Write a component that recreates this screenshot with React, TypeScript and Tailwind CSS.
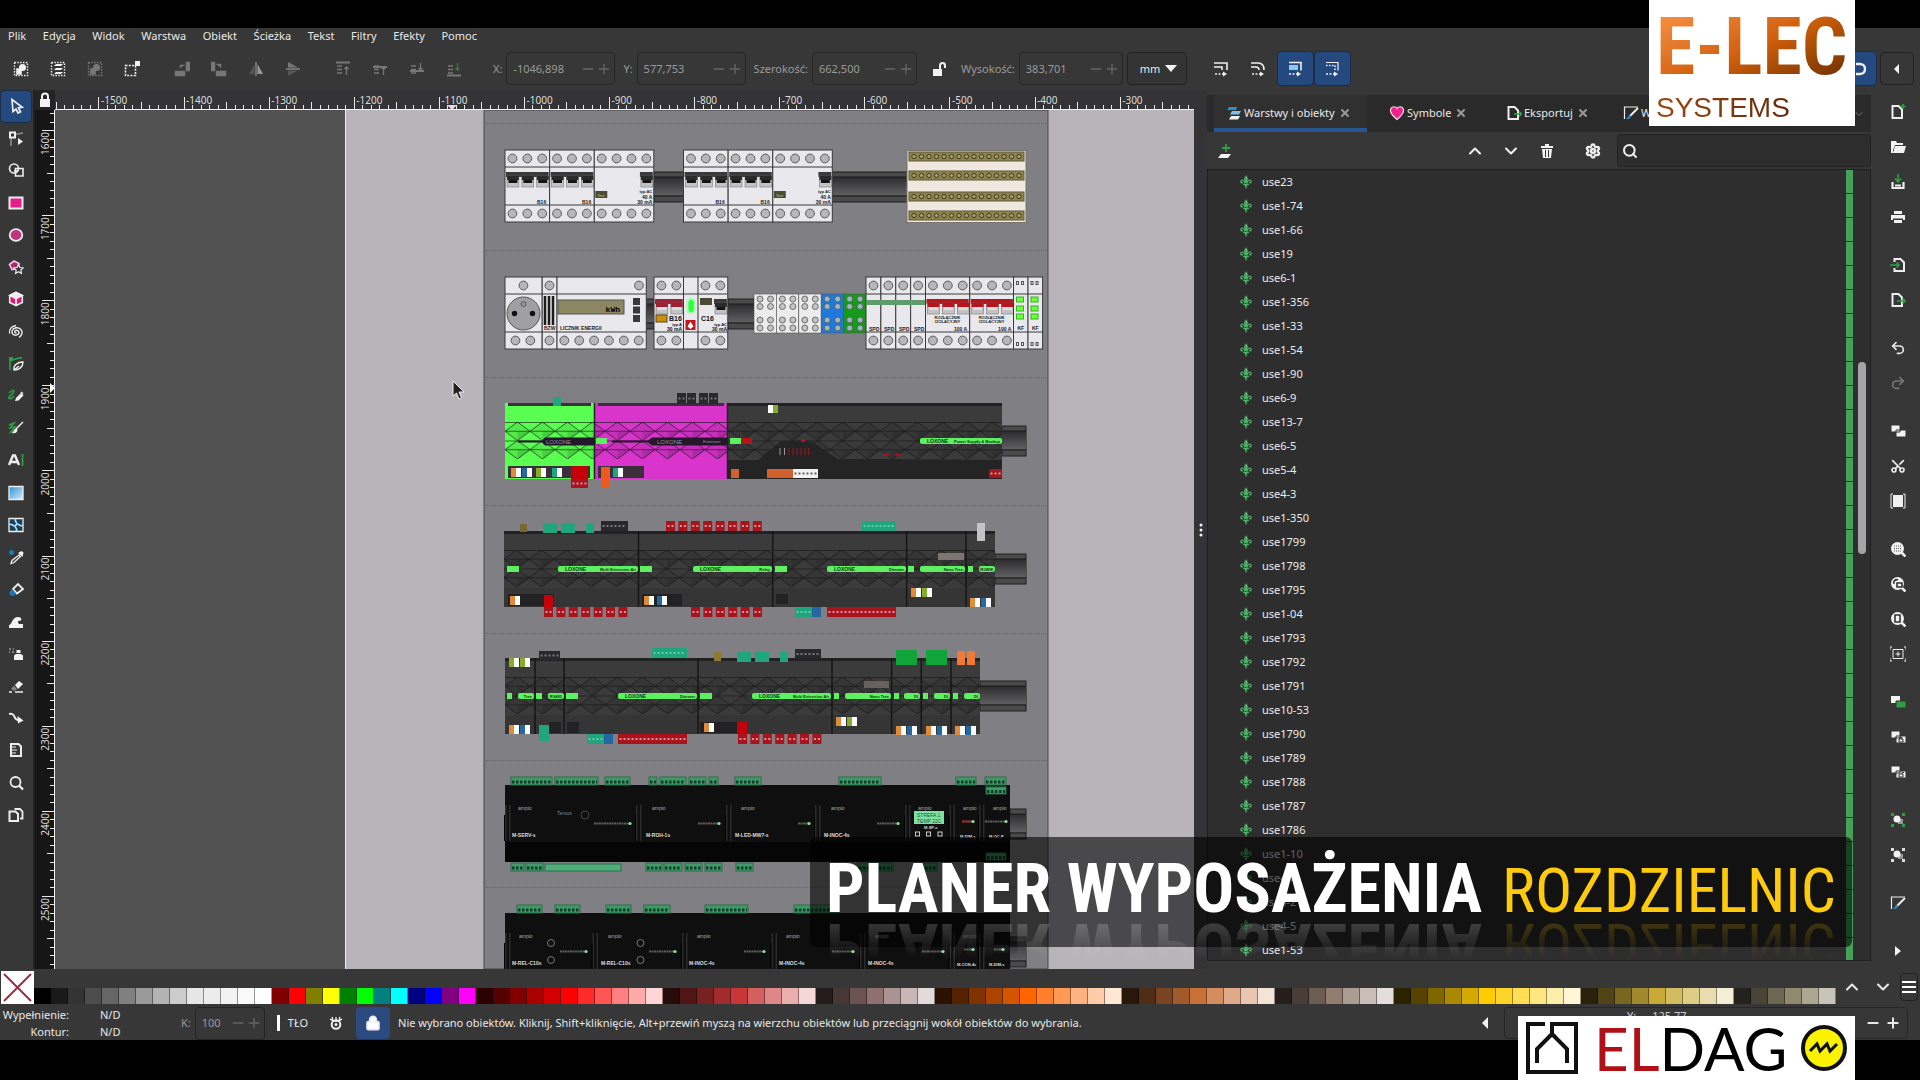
import React from 'react';
import {
  ChevronDown,
  ChevronUp,
  LockKeyhole,
  Minus,
  Plus,
  Redo2,
  Scissors,
  Search,
  Settings,
  Undo2,
  X,
} from 'lucide-react';

/* ---------- data ---------- */

const MENU = ['Plik', 'Edycja', 'Widok', 'Warstwa', 'Obiekt', 'Ścieżka', 'Tekst', 'Filtry', 'Efekty', 'Pomoc'];

const OBJECTS = [
  'use23', 'use1-74', 'use1-66', 'use19', 'use6-1', 'use1-356', 'use1-33', 'use1-54', 'use1-90', 'use6-9', 'use13-7',
  'use6-5', 'use5-4', 'use4-3', 'use1-350', 'use1799', 'use1798', 'use1795', 'use1-04', 'use1793', 'use1792',
  'use1791', 'use10-53', 'use1790', 'use1789', 'use1788', 'use1787', 'use1786', 'use1-10', 'use4-6', 'use4-2',
  'use4-5', 'use1-53',
];

const PALETTE = (
  '000000 1a1a1a 333333 4d4d4d 666666 808080 999999 b3b3b3 cccccc e6e6e6 ececec f2f2f2 f9f9f9 ffffff ' +
  '800000 ff0000 808000 ffff00 008000 00ff00 008080 00ffff 000080 0000ff 800080 ff00ff ' +
  '2b0000 550000 800000 aa0000 d40000 ff0000 ff2a2a ff5555 ff8080 ffaaaa ffd5d5 ' +
  '280b0b 501616 782121 a02c2c c83737 d35f5f de8787 e9afaf f4d7d7 ' +
  '241c1c 483737 6c5353 916f6f ac9393 c8b7b7 e3dbdb ' +
  '2b1100 552200 803300 aa4400 d45500 ff6600 ff7f2a ff9955 ffb380 ffccaa ffe6d5 ' +
  '28170b 502d16 784421 a05a2c c87137 d38d5f deaa87 e9c6af f4e3d7 ' +
  '241f1c 483e37 6c5d53 917c6f ac9d93 c8beb7 e3dedb ' +
  '2b2200 554400 806600 aa8800 d4aa00 ffcc00 ffd42a ffdd55 ffe680 ffeeaa fff6d5 ' +
  '28220b 504416 786721 a0892c c8ab37 d3bc5f decd87 e9ddaf f4eed7 ' +
  '24221c 484537 6c6753 918a6f aca793 c8c4b7'
).split(' ');

const range = (n: number) => Array.from({ length: n }, (_, i) => i);

/* ---------- icons ---------- */

const Icon: React.FC<{ children: React.ReactNode }> = ({ children }) => (
  <svg viewBox="0 0 16 16" className="size-4 shrink-0" fill="none" stroke="#eeeeee" strokeWidth="1.6">
    {children}
  </svg>
);

const W = '#f2f2f2';
const G = '#2f9e44';

const TOOLS: [string, React.ReactNode][] = [
  ['Wskaźnik', <path key="a" d="M4 1.500l1 12 3-2.500 2 4 2.500-1.200-2-4 3.800-.6z" strokeWidth="1.700" />],
  ['Węzły', <g key="a"><path d="M3 16V10c0-5 4-6 12-7" stroke="#8a8a8a" /><path d="M2 2.500h5v5H2z" fill="#333" strokeWidth="2" /><path d="M10 8l5 3.500-5 3.500z" fill={W} stroke="none" /></g>],
  ['Kształty', <g key="a"><circle cx="6" cy="6.500" r="4.500" /><path d="M7.500 6.500H15V14H7.500z" /><path d="M6 9h4" /></g>],
  ['Prostokąt', <path key="a" d="M1.500 2.500h13v11h-13z" fill="#e91e8c" strokeWidth="2" />],
  ['Elipsa', <ellipse key="a" cx="8" cy="8" rx="6.300" ry="5.800" fill="#c2347c" strokeWidth="1.800" />],
  ['Gwiazda', <g key="a"><path d="M1.500 5.500L6 2l5 2.500-1 5-6 1z" stroke="#f3c4dc" fill="#a82a68" /><path d="M10.500 5.500l1.400 3 3.300.4-2.400 2.200.6 3.300-2.900-1.700-2.900 1.700.6-3.300-2.400-2.200 3.300-.4z" fill="#333" strokeWidth="1.200" /></g>],
  ['Obiekt 3D', <g key="a"><path d="M8 1.500l6.300 3v7L8 14.500l-6.300-3v-7z" fill="#d81b74" /><path d="M8 1.500l6.300 3L8 7.500l-6.300-3z" fill="#fbe3ef" /><path d="M8 7.500v7" strokeWidth="1.800" /></g>],
  ['Spirala', <path key="a" d="M8.500 8.500c-.8.900-2.200 0-1.700-1.200.8-1.600 4-1.200 4.200 1 .2 2.700-4 3.700-6 2C2.800 8.200 4 4.300 8 3.800c4-.4 6.500 2.500 6 5.500-.3 1.900-1.500 3.200-3 4M1.500 9.500C.8 5.500 3.500 2 8 1.500" strokeWidth="1.400" />],
  ['Pióro', <g key="a"><path d="M2 14V3c3 3 7-2 12-1" stroke={G} /><path d="M1 1h4v4H1z" fill={G} stroke="none" /><path d="M6 14c-1-5 4-8 9-8 0 5-4 8-9 8zM6 14l5-4" strokeWidth="1.400" /></g>],
  ['Ołówek', <g key="a"><path d="M1 5c5-5 7-2 2 2s0 5 3 1" stroke={G} /><path d="M7 13l1-3 5-5 2.500 2.500-5 5z" fill={W} stroke="none" /><path d="M13 4l2 2" /></g>],
  ['Kaligrafia', <g key="a"><path d="M1 5l5-2-4 5 5-1-4 5 5-2" stroke={G} /><path d="M15 2L8 9" strokeWidth="1.400" /><path d="M8.500 8c-3 1-2 4-5 5 4 1 6-1 6-3.500z" fill={W} stroke="none" /></g>],
  ['Tekst', <g key="a"><path d="M1 13L5 3.500h2L11 13M3 10h6" strokeWidth="2.400" /><path d="M14.500 2v12" stroke={G} strokeWidth="1.800" /></g>],
  ['Gradient', <path key="a" d="M1 1.500h14v13H1z" fill="url(#sky)" strokeWidth="1.300" />],
  ['Siatka', <g key="a"><path d="M1 1.500h14v13H1z" fill="#1d3f55" strokeWidth="1.300" /><path d="M8 1.500c-3 3 3 4 0 6.500s3 3.500 0 6.500M1 8c3-3 4 3 7 0s4 3 7 0" stroke="#9fdcff" /></g>],
  ['Próbnik', <g key="a"><circle cx="3.500" cy="3.500" r="2.500" fill="#1c79b5" stroke="none" /><path d="M3 14.500l1-3L11 6l1.500 1.500L6 13.500z" strokeWidth="1.300" /><path d="M10 4l4.500 4 1-4.500-2-1.500z" fill={W} stroke="none" /></g>],
  ['Wypełnianie', <g key="a"><path d="M5 8l5-5 5 5-6 4.500z" strokeWidth="1.800" /><path d="M4 9c-5 5 2 6.500 3 3.500z" fill="#1c79b5" stroke="#1c79b5" /></g>],
  ['Ulepszanie', <path key="a" d="M1 14v-3c3 0 3-8 9-8 4 0 4 3 2 4-2-1-3 1-1 3h4v4z" fill={W} stroke="none" />],
  ['Spray', <g key="a"><path d="M6 14V9.500L8 8h5l2 1.500V14zM8.500 4h4v3h-4z" fill={W} stroke="none" /><path d="M1 3h2M5 3h1M1 6h1M4 6h2" stroke="#999" /></g>],
  ['Gumka', <g key="a"><path d="M7 7l4-4 4 3-5 5z" fill={W} stroke="none" /><path d="M6 8l3 3-3 2-3-2.500z" fill="#888" stroke="none" /><path d="M1 14h3M7 14h8" /></g>],
  ['Łącznik', <g key="a"><path d="M1 4c7-2 4 7 10 6" strokeWidth="2" /><path d="M9.500 6l6 4.500-5.500 3z" fill={W} stroke="none" /></g>],
  ['Miarka', <g key="a"><path d="M3 2h7.500l2.500 2.500V14H3z" strokeWidth="2" /><path d="M4 5h4M4 8h5M4 11h4" strokeWidth="1.200" /></g>],
  ['Powiększenie', <g key="a"><circle cx="7.500" cy="7" r="5" strokeWidth="1.800" /><path d="M11 10.500l4 4" strokeWidth="2.400" /></g>],
  ['Strony', <g key="a"><path d="M1.500 4.500h6L10 7v7H1.500z" strokeWidth="2" /><path d="M6.500 2h5.500l2.500 2.500v7H12" strokeWidth="1.800" /></g>],
];

const two = <path d="M1 2h9v7H1zM6 7h10v7H6z" fill={W} stroke="#333" strokeWidth="1" />;
const page = <path d="M2.500 2h6L12 5.500V14H2.500z" strokeWidth="2" />;
const lens = (
  <g>
    <circle cx="7.500" cy="7.500" r="6.500" fill={W} stroke="none" />
    <path d="M11 11l4.500 4.500" strokeWidth="2.600" />
  </g>
);
const handles = (c: string) => <path d="M1 1h3v3H1zM12 1h3v3h-3zM1 12h3v3H1zM12 12h3v3h-3z" fill={c} stroke="none" />;

// grouped the way the command bar separates them
const COMMANDS: [string, React.ReactNode][][] = [
  [
    ['Nowy', <g key="a">{page}<path d="M13 0v5M10.500 2.500h5" stroke={G} /></g>],
    ['Otwórz', <path key="a" d="M1 2h5l1 2h6v2H5l-2 5V14H1zM5 7h11l-2 7H3z" fill={W} stroke="none" />],
    ['Zapisz', <g key="a"><path d="M2.500 8v6h11V8M5 11.500h6" strokeWidth="2.200" /><path d="M8 0v7M5 4.500L8 8l3-3.500" stroke={G} /></g>],
    ['Drukuj', <path key="a" d="M4 2h8v3H4zM1 6h14v5h-2V9.500H3V11H1zM4 11h8v3H4z" fill={W} stroke="none" />],
  ],
  [
    ['Importuj', <g key="a"><path d="M4.500 5V2h6L14 5.500V14H4.500v-3" strokeWidth="2" /><path d="M0 8h9M6.500 5.500L9 8l-2.500 2.500" stroke={G} /></g>],
    ['Eksportuj plik', <g key="a">{page}<path d="M7 9h8M12.500 6.500L15 9l-2.500 2.500" stroke={G} /></g>],
  ],
  [
    ['Cofnij', <Undo2 key="a" x="0" y="0" width="16" height="16" strokeWidth="2.500" />],
    ['Ponów', <Redo2 key="a" x="0" y="0" width="16" height="16" stroke="#777" strokeWidth="2.500" />],
  ],
  [
    ['Duplikuj', two],
    ['Wytnij', <g key="a" transform="rotate(-90 8 8)"><Scissors x="0" y="0" width="16" height="16" strokeWidth="2.600" /></g>],
    ['Wklej', <g key="a"><path d="M4 3h8v10H4z" fill={W} strokeWidth="2" /><path d="M3 1H1v14h2M13 1h2v14h-2" strokeWidth="1" /></g>],
  ],
  [
    ['Powiększ zaznaczenie', <g key="a">{lens}<path d="M4 5h7M4 7.500h7M4 10h7" stroke="#555" strokeWidth="1" strokeDasharray="1 1" /></g>],
    ['Powiększ rysunek', <g key="a">{lens}<path d="M7 7h5v4H7zM4 8a3 3 0 0 1 4-4" stroke="#333" fill={W} /></g>],
    ['Powiększ stronę', <g key="a">{lens}<path d="M5 4h5v7H5z" stroke="#333" /></g>],
    ['Wyśrodkuj stronę', <g key="a"><path d="M3 3.500h10v9H3zM8 5.500v5M5.500 8h5" strokeWidth="1" /><path d="M2 1H0v3M14 1h2v3M2 15H0v-3M14 15h2v-3" strokeWidth="1" /></g>],
  ],
  [
    ['Powiel', <g key="a"><path d="M1 2h9v7H1z" fill={W} stroke="none" /><path d="M6 7h10v7H6z" fill={G} stroke="#333" strokeWidth="1" /></g>],
    ['Klonuj', <g key="a">{two}<path d="M9 10h4v3H9zM10 10V8.500h2V10" stroke="#333" strokeWidth="1" /></g>],
    ['Odłącz klon', <g key="a">{two}<path d="M9 10h4v3H9zM12 10V8.500h2" stroke="#333" strokeWidth="1" /></g>],
  ],
  [
    ['Grupuj', <g key="a">{handles(G)}<path d="M8 7h5v5H8z" fill="#999" stroke="none" /><circle cx="7" cy="7" r="3.500" fill={W} stroke="none" /></g>],
    ['Rozgrupuj', <g key="a">{handles('#ddd')}<path d="M8 7h5v5H8z" fill="#999" stroke="none" /><circle cx="7" cy="7" r="3.500" fill={W} stroke="none" /></g>],
  ],
  [['Wypełnienie i kontur', <g key="a"><path d="M1.500 14V2H15" strokeWidth="1.200" /><path d="M15 3L7 11" strokeWidth="2" /><path d="M7 10c-2 0-2 3-4 4 3 1 5-1 5-3z" fill="#2c86c4" stroke="none" /></g>]],
  [['Więcej', <path key="a" d="M5 3l6 5-6 5z" fill={W} stroke="none" />]],
];

const dots = <path d="M1.500 1.500h13v13h-13z" strokeWidth="1.400" strokeDasharray="1.500 1.300" />;
const align = (bar: number, up: boolean, c: string) => (
  <g stroke="#777">
    <path d={`M1 ${bar}h14`} strokeWidth="2" />
    <path d="M2 5h5M2 8.500h5M2 12h5" strokeWidth="1.400" />
    <path d={up ? 'M11.500 14V6M9.500 8l2-2 2 2' : 'M11.500 2v7M9.500 7l2 2 2-2'} stroke={c} strokeWidth="1.300" />
  </g>
);

const SELECT_ACTIONS: [string, React.ReactNode][][] = [
  [
    ['Zaznacz wszystko', <g key="a">{dots}<path d="M4 8h4v5H4z" fill={W} /><circle cx="9.500" cy="6.500" r="3.500" fill={W} stroke="none" /></g>],
    ['Zaznacz w warstwach', <g key="a">{dots}<path d="M6 3h7l-2 2H4zM6 7h7l-2 2H4zM6 11h7l-2 2H4z" fill={W} stroke="none" /></g>],
    ['Odznacz', <g key="a" opacity="0.35">{dots}<path d="M4 8h4v5H4z" fill={W} /><circle cx="9.500" cy="6.500" r="3.500" fill={W} stroke="none" /></g>],
    ['Przełącz ramkę', <g key="a"><path d="M1.500 4.500h10v10h-10z" strokeDasharray="2 1.300" /><path d="M11 0h5v5h-5z" fill={W} stroke="none" /></g>],
  ],
  [
    ['Obróć w lewo', <path key="a" d="M1 10h10v5H1zM12 1h4v9h-4zM6 7V4h5" fill="#777" stroke="#777" strokeWidth="0.500" />],
    ['Obróć w prawo', <path key="a" d="M5 10h10v5H5zM0 1h4v9H0zM5 3h5v4" fill="#777" stroke="#777" strokeWidth="0.500" />],
    ['Odbij poziomo', <g key="a" stroke="none"><path d="M6.500 3v10H1z" fill="#555" /><path d="M9.500 3v10H15z" fill="#999" /><path d="M7.500 1h1v14h-1z" fill="#aaa" /></g>],
    ['Odbij pionowo', <g key="a" stroke="none"><path d="M3 1v5.500h10z" fill="#777" /><path d="M3 15V9.500h10z" fill="#555" /><path d="M1 7.500h14v1H1z" fill="#aaa" /></g>],
  ],
  [
    ['Na wierzch', align(1.5, true, '#777')],
    ['Wyżej', align(6, true, '#777')],
    ['Niżej', align(10, false, '#777')],
    ['Pod spód', align(14.5, false, '#3d7a3d')],
  ],
];

const SNAP: [string, boolean, React.ReactNode][] = [
  ['Skaluj kontur', false, <path key="a" d="M1 2h13v7M1 6h8v3" />],
  ['Skaluj rogi', false, <path key="a" d="M1 2h7c4 0 6 3 6 7M1 6h5c2 0 3 1 3 3" />],
  ['Przesuń gradienty', true, <g key="a"><path d="M2 1.500h12v8" /><path d="M2 4h9v5H2z" fill="#8fc8ee" stroke="none" /></g>],
  ['Przesuń wzory', true, <g key="a"><path d="M2 1.500h12v8" strokeWidth="1.200" /><path d="M2 4.500h9v5" strokeDasharray="1.500 1.500" /></g>],
];

const Fleur = () => (
  <svg viewBox="0 0 12 14" className="h-3.5 w-3 shrink-0" fill="#4fae6a">
    <path d="M6 0l2 3.500L6.800 8H5.200L4 3.500z" />
    <path d="M5 8.500C4.500 5 1.300 4 .8 6.500c-.2 1.500 1.500 1.800 1.800.8M7 8.500C7.500 5 10.700 4 11.200 6.500c.2 1.500-1.500 1.800-1.800.8" fill="none" stroke="#4fae6a" strokeWidth="1.300" />
    <path d="M3 8.700h6V10H7.500L6 14l-1.500-4H3z" />
  </svg>
);

/* ---------- small controls ---------- */

const ToolButton: React.FC<{ label: string; active?: boolean; className?: string; children: React.ReactNode }> = ({
  label,
  active,
  className = '',
  children,
}) => (
  <button
    type="button"
    aria-label={label}
    className={`flex shrink-0 items-center justify-center rounded ${active ? 'bg-[#24497f] ring-1 ring-[#1b2c49]' : ''} ${className}`}
  >
    <Icon>{children}</Icon>
  </button>
);

const Spin: React.FC<{ label: string; value: string; id: string; className: string }> = ({ label, value, id, className }) => (
  <div className="flex shrink-0 items-center gap-1 text-[#9a9a9a]">
    <label htmlFor={id}>{label}</label>
    <div className={`flex h-[33px] items-center rounded border border-[#242424] pl-1.5 pr-0.5 ${className}`}>
      <input id={id} readOnly value={value} className="w-0 min-w-0 flex-1 bg-transparent outline-none" />
      <button type="button" aria-label={`${label} mniej`} className="text-[#666]"><Minus className="size-4" strokeWidth={2} /></button>
      <button type="button" aria-label={`${label} więcej`} className="text-[#666]"><Plus className="size-4" strokeWidth={2} /></button>
    </div>
  </div>
);

/* ---------- rulers ---------- */

const STEP = 8.51;

const TopRuler = () => (
  <svg className="h-5 w-full" viewBox="55 90 1139 20" preserveAspectRatio="xMinYMin slice">
    <rect x="55" y="90" width="2400" height="20" fill="#343436" />
    {range(135).map((i) => {
      const x = 55 + 0.85 + i * STEP;
      const k = (i - 5 + 100) % 10;
      const h = k === 0 ? 12 : k === 5 ? 7 : 4;
      return <rect key={i} x={Math.round(x)} y={109 - h} width="1" height={h} fill="#e8e8e8" />;
    })}
    {range(13).map((i) => (
      <text key={i} x={101 + i * 85.1} y="104" fontSize="10" fill="#dcdcdc">{-1500 + i * 100}</text>
    ))}
    <rect x="55" y="109" width="2400" height="1" fill="#f4f4f4" />
    <path d="M447 105h10l-5 5z" fill="#e8d8e6" />
  </svg>
);

const SideRuler = () => (
  <svg className="h-[859px] w-5" viewBox="35 110 20 859">
    <rect x="35" y="110" width="20" height="859" fill="#161616" />
    {range(101).map((i) => {
      const y = 113 + i * STEP;
      const k = (i - 2 + 100) % 10;
      const w = k === 0 ? 12 : k === 5 ? 7 : 4;
      return <rect key={i} x={54 - w} y={Math.round(y)} width={w} height="1" fill="#e8e8e8" />;
    })}
    {range(10).map((i) => (
      <text key={i} transform={`translate(49 ${155 + i * 85.1}) rotate(-90)`} fontSize="10" fill="#dcdcdc">{1600 + i * 100}</text>
    ))}
    <rect x="54" y="110" width="1" height="859" fill="#f4f4f4" />
    <path d="M50 383v10l5-5z" fill="#fff" />
  </svg>
);

/* ---------- drawing: switchboard rows ---------- */

const M = 14.88; // one DIN module

const Rail = ({ x, w, y }: { x: number; w: number; y: number }) => (
  <g>
    <rect x={x} y={y} width={w} height="30" fill="#4a4a4c" stroke="#1e1e1e" />
    <rect x={x} y={y + 5} width={w} height="18" fill="url(#rail)" />
    <path d={`M${x} ${y + 5}h${w}M${x} ${y + 24}h${w}`} stroke="#1b1b1b" />
  </g>
);

const Case = ({ x, n, y }: { x: number; n: number; y: number }) => (
  <g stroke="#3a3a3a" strokeWidth="1">
    <rect x={x} y={y} width={n * M} height="72" fill="#e9e8ec" />
    <path d={`M${x} ${y + 17}h${n * M}M${x} ${y + 55}h${n * M}`} />
  </g>
);

const Screws = ({ x, n, y }: { x: number; n: number; y: number }) => (
  <g fill="#b7b7b9" stroke="#5b5b5b" strokeWidth="1">
    {range(n).map((i) => <circle key={i} cx={x + (i + 0.5) * M} cy={y} r="4.400" />)}
  </g>
);

const Levers = ({ x, n, y, c }: { x: number; n: number; y: number; c: string }) => (
  <g>
    <rect x={x + 1} y={y} width={n * M - 2} height="5" fill={c} />
    {range(Math.round(n)).map((i) => (
      <g key={i}>
        <rect x={x + i * M + 2} y={y + 4} width={M - 3} height="11" fill="#c3c3c6" stroke="#666" strokeWidth="0.500" />
        <rect x={x + i * M + 2} y={y + 4} width={M - 3} height="4" fill={c === '#3a3a3a' ? '#2a2a2a' : c} />
        <rect x={x + i * M + 3.5} y={y + 8} width={M - 6} height="3" fill={c === '#3a3a3a' ? '#151515' : '#ddd'} />
      </g>
    ))}
  </g>
);

const Breaker = ({ x, n, y, c = '#3a3a3a' }: { x: number; n: number; y: number; c?: string }) => (
  <g>
    <Case x={x} n={n} y={y} />
    <Screws x={x} n={Math.round(n)} y={y + 8.5} />
    <Screws x={x} n={Math.round(n)} y={y + 63.5} />
    <Levers x={x} n={n} y={y + 22} c={c} />
  </g>
);

const Rcd = ({ x, y }: { x: number; y: number }) => (
  <g>
    <Case x={x} n={4} y={y} />
    <Screws x={x} n={4} y={y + 8.5} />
    <Screws x={x} n={4} y={y + 63.5} />
    <Levers x={x + 3 * M} n={1} y={y + 22} c="#3a3a3a" />
    <rect x={x + 1} y={y + 41} width="12" height="7" fill="#4b4b35" />
    <text x={x + 3} y={y + 46.5} fontSize="4" fill="#c8c890">Test</text>
    <g fontSize="5" fontWeight="700" textAnchor="end" fill="#222">
      <text x={x + 58} y={y + 43} fontSize="4">typ AC</text>
      <text x={x + 58} y={y + 49}>40 A</text>
      <text x={x + 58} y={y + 54}>30 mA</text>
    </g>
  </g>
);

const R = ({ d, f, s }: { d: number[][]; f: string; s?: string }) => (
  <g fill={f} stroke={s}>
    {d.map(([x, y, w, h], i) => <rect key={i} x={x} y={y} width={w} height={h} />)}
  </g>
);

// connector block with a line of contact dots
const Conn = ({ d, f, dot = '#f0caca' }: { d: number[][]; f: string; dot?: string }) => (
  <g>
    {d.map(([x, y, w, h], i) => (
      <g key={i}>
        <rect x={x} y={y} width={w} height={h} fill={f} />
        <path d={`M${x + 1.5} ${y + h / 2}h${w - 3}`} stroke={dot} strokeWidth="2" strokeDasharray="2 2" opacity="0.7" />
      </g>
    ))}
  </g>
);

const Chips = ({ d }: { d: [number, number, string][] }) => (
  <g>
    {d.map(([x, y, c], i) => (
      <g key={i}>
        <rect x={x} y={y} width="10" height="9" fill="#fff" />
        <rect x={x} y={y} width="5" height="9" fill={c} />
      </g>
    ))}
  </g>
);

const Lox = ({ x, y, cuts, end }: { x: number; y: number; cuts: number[]; end: number }) => (
  <g>
    <rect x={x} y={y} width={end - x} height="76" fill="#3b3b3c" />
    <rect x={x} y={y + 57} width={end - x} height="19" fill="#353536" />
    <g transform={`translate(${x} ${y + 19})`}>
      <rect width={end - x} height="37" fill="url(#lattice)" />
    </g>
    <path d={`M${x} ${y + 1.5}H${end}`} stroke="#222" strokeWidth="3" />
    {cuts.map((c) => <path key={c} d={`M${c} ${y}v76`} stroke="#161616" strokeWidth="1.500" />)}
  </g>
);

const Bars = ({ y, d }: { y: number; d: [number, number, string, string][] }) => (
  <g>
    {d.map(([a, b, l, r], i) => (
      <g key={i} fontSize="5" fontWeight="700" fill="#123a12">
        <rect x={a} y={y} width={b - a} height="6" rx={r ? 2 : 0} fill="#5df060" />
        {l && <text x={a + 7} y={y + 5}>{l}</text>}
        {r && <text x={b - 2} y={y + 5} fontSize="4" textAnchor="end">{r}</text>}
      </g>
    ))}
  </g>
);

const Terms = ({ y, h, d }: { y: number; h: number; d: number[][] }) => (
  <g>
    {d.map(([a, b], i) => (
      <g key={i}>
        <rect x={a} y={y} width={b - a} height={h} fill="#3f9a68" stroke="#2b6f4a" />
        <path d={`M${a + 1} ${y + h / 2 + 1}H${b - 1}`} stroke="#123f27" strokeWidth="3" strokeDasharray="2.500 1.500" />
      </g>
    ))}
  </g>
);

const Slots = ({ d, y }: { d: number[]; y: number }) => (
  <g fill="#2b2b2c">
    {d.map((x) => (
      <g key={x}>
        <rect x={x} y={y + 20} width="1.500" height="36" />
        <rect x={x + 4} y={y + 20} width="1.500" height="36" />
        <rect x={x - 1} y={y + 30} width="1" height="26" fill="#000" />
      </g>
    ))}
  </g>
);

const Leds = ({ d }: { d: [number, number, number][] }) => (
  <g>
    {d.map(([a, b, y]) => (
      <g key={a}>
        <path d={`M${a} ${y}H${b}`} stroke="#5c5c5c" strokeWidth="2" strokeDasharray="2 0.500" />
        <circle cx={b} cy={y} r="1.600" fill="#8fe29a" />
      </g>
    ))}
  </g>
);

const Labels = ({ d, y, c = '#dddddd', bold = true, size = 5 }: { d: [number, string][]; y: number; c?: string; bold?: boolean; size?: number }) => (
  <g fontSize={size} fontWeight={bold ? 700 : 400} fill={c}>
    {d.map(([x, t]) => <text key={x} x={x} y={y}>{t}</text>)}
  </g>
);

const run = (x: number, n: number, y: number): number[][] => range(n).map((i) => [x + i * 12.4, y, 9, 10]);

const OR = '#e08a3c';
const BL = '#2467a3';
const GN = '#84ad2b';
const TL = '#1fa67c';
const RD = '#a8141e';

const Drawing = () => (
  <svg className="h-[859px] w-full" viewBox="55 110 1139 859" preserveAspectRatio="xMinYMin slice" fontFamily="Liberation Sans, sans-serif">
    <defs>
      <linearGradient id="rail" x1="0" y1="0" x2="0" y2="1">
        <stop offset="0" stopColor="#2c2c2d" />
        <stop offset="1" stopColor="#5f5f61" />
      </linearGradient>
      <linearGradient id="sky" x1="0" y1="0" x2="1" y2="1">
        <stop offset="0" stopColor="#2b8fd0" />
        <stop offset="1" stopColor="#d8eefc" />
      </linearGradient>
      <pattern id="lattice" width="25" height="18.500" patternUnits="userSpaceOnUse">
        <path d="M12.500 0L25 9.200 12.500 18.500 0 9.200z" fill="#000" fillOpacity="0.080" stroke="#101010" strokeOpacity="0.750" strokeWidth="0.900" />
        <path d="M12.500 9.200h12.500L12.500 18.500z" fill="#000" fillOpacity="0.120" />
        <path d="M0 .5h25M0 9.200h25" stroke="#161616" strokeOpacity="0.700" strokeWidth="0.900" />
      </pattern>
    </defs>
    <rect x="55" y="110" width="2400" height="859" fill="#525252" />
    <rect x="345" y="110" width="2200" height="859" fill="#b7b5b9" />
    <rect x="345" y="110" width="1" height="859" fill="#eee" />
    <rect x="484" y="110" width="564" height="859" fill="#807f83" stroke="#47474a" />
    {[123, 250, 377, 505, 633, 760, 887].map((y) => (
      <path key={y} d={`M485 ${y}.5h562`} stroke="#6e6d71" strokeDasharray="3 1" />
    ))}

    {/* row 1: breakers and terminal strip */}
    <Rail x={654} w={30} y={172} />
    <Rail x={832} w={75} y={172} />
    {[505, 683.500].map((x) => (
      <g key={x}>
        <Breaker x={x} n={3} y={150} />
        <Breaker x={x + 3 * M} n={3} y={150} />
        <Rcd x={x + 6 * M} y={150} />
        <Labels y={204} c="#222" d={[[x + 32, 'B16'], [x + 77, 'B16']]} />
      </g>
    ))}
    <rect x="907" y="150.500" width="119" height="72" fill="#efe8df" stroke="#77756c" />
    {[152, 171, 192, 211].map((y) => (
      <g key={y}>
        <rect x="909" y={y} width="115" height="9" fill="#8d8350" stroke="#5c5637" />
        {range(15).map((i) => <circle key={i} cx={914 + i * 7.5} cy={y + 4.5} r="2.200" fill="#a69c68" stroke="#3f3a1c" />)}
      </g>
    ))}

    {/* row 2: meter, fire alarm breaker, terminals, surge protection, switches */}
    <Rail x={646} w={8} y={299} />
    <Rail x={728} w={26} y={299} />
    <Case x={505} n={2.5} y={277} />
    <Case x={542.2} n={1} y={277} />
    <Case x={557} n={6} y={277} />
    <Screws x={516} n={1} y={285.500} />
    <Screws x={508} n={2} y={340.500} />
    <Screws x={542} n={1} y={285.500} />
    <Screws x={542} n={7} y={340.500} />
    <Screws x={631.500} n={1} y={285.500} />
    <circle cx="523.500" cy="313.500" r="16.500" fill="#a0a0a2" stroke="#555" />
    <g fill="#111"><circle cx="514.500" cy="313.500" r="2.700" /><circle cx="532.500" cy="313.500" r="2.700" /></g>
    <circle cx="523.500" cy="304" r="2.500" fill="#999" stroke="#555" />
    <path d="M545 296v29M549 296v29M553 296v29" stroke="#1b1b1b" strokeWidth="2.500" />
    <rect x="558" y="300" width="66" height="14" fill="#8b8763" stroke="#555" />
    <text x="620" y="312" textAnchor="end" fontSize="8" fontWeight="700" fontFamily="Liberation Mono">kWh</text>
    <R f="#3a3a3a" d={[[633, 298, 7, 7], [633, 306.500, 7, 7], [633, 315, 7, 7]]} />
    <Labels y={330} c="#222" d={[[544, 'BZW'], [560, 'LICZNIK ENERGII']]} />
    <Breaker x={654} n={2} y={277} c="#a11f33" />
    <Case x={683.5} n={1} y={277} />
    <rect x="687.500" y="299" width="7" height="14" rx="3" fill="#2dff3c" stroke="#a5ffae" strokeWidth="2" />
    <rect x="685.500" y="320" width="10" height="10" fill="#c4141c" />
    <path d="M690.500 321.500l3 5-3 2.500-3-2.500z" fill="#fff" />
    <Case x={698} n={2} y={277} />
    <Screws x={698} n={2} y={285.500} />
    <Screws x={698} n={2} y={340.500} />
    <Levers x={713} n={1} y={299} c="#3a3a3a" />
    <rect x="656" y="315" width="11" height="7" fill="#c99012" stroke="#5f4406" />
    <rect x="700" y="298" width="12" height="7" fill="#4b4b35" />
    <g fontSize="7" fontWeight="700" fill="#111">
      <text x="669" y="321">B16</text>
      <text x="701" y="321">C16</text>
      <g fontSize="5" textAnchor="end"><text x="682" y="331">30 mA</text><text x="727" y="331">30 mA</text></g>
      <g fontSize="4" textAnchor="end"><text x="682" y="326">typ A</text><text x="727" y="326">typ AC</text></g>
    </g>
    {['#ececec', '#ececec', '#ececec', '#1f78dd', '#179a1c'].map((c, i) => (
      <g key={i}>
        <rect x={754 + i * 22.4} y="294" width="22.400" height="39" fill={c} stroke="#555" strokeWidth="0.600" />
        {range(8).map((k) => (
          <circle key={k} cx={760 + i * 22.4 + (k % 2) * 10.5} cy={[299, 306.5, 320, 328][k >> 1]} r="3" fill={i > 2 ? '#9ab8bd' : '#c4c4c4'} stroke="#555" strokeWidth="0.800" />
        ))}
      </g>
    ))}
    {range(4).map((i) => <Case key={i} x={866 + i * M} n={1} y={277} />)}
    <Screws x={866} n={4} y={285.500} />
    <Screws x={866} n={4} y={340.500} />
    <rect x="866" y="300" width="59" height="5" fill="#5d9c6b" />
    <Labels y={331} c="#222" d={[[869, 'SPD'], [884, 'SPD'], [899, 'SPD'], [914, 'SPD']]} />
    {[925.500, 969.700].map((x) => (
      <g key={x}>
        <Breaker x={x} n={2.97} y={277} c="#b8141c" />
        <g fontSize="4" fontWeight="700" textAnchor="middle" fill="#222">
          <text x={x + 22} y="319">ROZŁĄCZNIK</text>
          <text x={x + 22} y="323">IZOLACYJNY</text>
          <text x={x + 35} y="331" fontSize="5">100 A</text>
        </g>
      </g>
    ))}
    {[1013.500, 1028].map((x) => (
      <g key={x}>
        <Case x={x} n={0.98} y={277} />
        <R f="#6dff2e" s="#35b030" d={[[x + 3, 297, 7, 5], [x + 3, 306, 7, 5], [x + 3, 314, 7, 5]]} />
        <R f="none" s="#555" d={[[x + 3, 281.500, 2, 3], [x + 8, 281.500, 2, 3], [x + 3, 342.500, 2, 3], [x + 8, 342.500, 2, 3]]} />
        <Labels y={330} c="#222" d={[[x + 4, 'KF']]} />
      </g>
    ))}

    {/* row 3: miniserver, extension, power supply */}
    <Rail x={1002} w={24} y={426} />
    <Lox x={505} y={403} end={1002} cuts={[]} />
    <path d="M727 460h31l23-19h30l27 18h48l120 1h-4v19H727z" fill="#242425" />
    <rect x="505" y="403" width="89" height="76" fill="#59ff51" />
    <rect x="595" y="403" width="132" height="76" fill="#d934cc" />
    <g transform="translate(505 422)"><rect width="222" height="37" fill="url(#lattice)" /></g>
    <path d="M594.500 403v76M727.500 403v76" stroke="#222" strokeWidth="1.500" />
    <R f="#3a2f3a" d={[[508, 403, 83, 3], [598, 403, 126, 3], [508, 466, 82, 12], [598, 466, 46, 12]]} />
    <path d="M518 440.500h24l3-3h49v8h-49l-3-3h-24zM612 440.500h36l4-3h75v8h-75l-4-3h-36z" fill="#22182a" />
    <g fontSize="6" fill="#9a8fa0"><text x="546" y="443.500">LOXONE</text><text x="657" y="443.500">LOXONE</text><text x="703" y="443" fontSize="4">Extension</text></g>
    <Bars y={438} d={[[596, 607, '', ''], [730, 741, '', ''], [920, 1002, 'LOXONE', 'Power Supply & Backup']]} />
    <R f="#b4141c" d={[[741, 438, 11, 6], [801, 439, 4, 3], [883, 454, 6, 1.500], [895, 454, 6, 1.500]]} />
    <path d="M789 448v7M793 448v7M797 448v7M801 448v7M805 448v7M808.500 448v7" stroke="#8c1c22" />
    <path d="M780 448v7M784.500 448v7" stroke="#999" />
    <R f={TL} d={[[553, 397, 8, 9]]} />
    <Conn f="#28282d" dot="#999" d={[[677, 393, 9, 11], [687, 393, 9, 11], [699, 393, 9, 11], [709, 393, 9, 11]]} />
    <Chips d={[[511, 468, OR], [522, 468, BL], [536, 468, GN], [552, 468, TL], [613, 468, TL]]} />
    <R f="#fff" d={[[768, 405, 5, 8]]} /><R f={GN} d={[[773, 405, 5, 8]]} />
    <R f="#c4000a" d={[[571, 466, 17, 13]]} />
    <Conn f={RD} d={[[571, 479, 17, 9], [989, 469, 13, 9]]} />
    <R f="#ee5a1e" d={[[601, 467, 9, 21]]} />
    <R f="#d0602c" d={[[731, 469, 8, 9], [767, 469, 26, 9]]} />
    <Conn f="#f2f2f2" dot="#222" d={[[793, 469, 25, 9]]} />

    {/* row 4 */}
    <Rail x={995} w={31} y={554} />
    <Lox x={504} y={531} end={995} cuts={[638.500, 772.700, 906.600, 966]} />
    <Bars y={566} d={[[507, 519, '', ''], [558, 638, 'LOXONE', 'Multi Extension Air'], [640, 652, '', ''], [693, 772, 'LOXONE', 'Relay'], [775, 787, '', ''], [827, 906, 'LOXONE', 'Dimmer'], [908, 914, '', ''], [920, 965, '', 'Nano Tree'], [968, 973, '', ''], [979, 995, '', 'RGBW']]} />
    <R f="#7c7572" d={[[938, 553, 26, 7]]} />
    <R f="#77692e" d={[[520, 524, 7, 8]]} />
    <R f={TL} d={[[543, 523, 14, 10], [561, 523, 14, 10], [586, 523, 8, 10]]} />
    <Conn f="#28282d" dot="#999" d={[[601, 521, 27, 10]]} />
    <Conn f={RD} d={run(666, 8, 521)} />
    <Conn f={TL} dot="#7de0bb" d={[[862, 521, 34, 10]]} />
    <R f="#c3c3c8" d={[[977, 523, 8, 18]]} />
    <R f="#222224" d={[[508, 594, 46, 12], [642, 594, 40, 12], [776, 594, 12, 10]]} />
    <R f="#c4000a" d={[[544, 595, 9, 12]]} />
    <Conn f={RD} d={[...run(544, 7, 607), ...run(691, 6, 607), [827, 607, 69, 10]]} />
    <Conn f={TL} dot="#7de0bb" d={[[795, 607, 17, 10]]} />
    <R f={BL} d={[[812, 607, 9, 10]]} />
    <Chips d={[[510, 596, OR], [644, 596, OR], [657, 596, BL], [911, 588, OR], [922, 588, GN], [970, 598, OR], [981, 598, BL]]} />

    {/* row 5 */}
    <Rail x={980} w={46} y={681} />
    <Lox x={505} y={658} end={980} cuts={[535, 564, 698, 832, 891.600, 921.300, 951]} />
    <Bars y={693} d={[[507, 512, '', ''], [518, 534, '', 'Tree'], [536, 542, '', ''], [548, 564, '', 'RS485'], [566, 578, '', ''], [618, 697, 'LOXONE', 'Dimmer'], [700, 712, '', ''], [752, 831, 'LOXONE', 'Multi Extension Air'], [834, 839, '', ''], [845, 891, '', 'Nano Tree'], [894, 899, '', ''], [904, 920, '', 'DI'], [923, 928, '', ''], [934, 950, '', 'DI'], [953, 958, '', ''], [964, 980, '', 'DI']]} />
    <R f="#66615f" d={[[864, 681, 25, 7]]} />
    <Conn f="#28282d" dot="#999" d={[[539, 651, 21, 9], [795, 649, 26, 10]]} />
    <Conn f={TL} dot="#7de0bb" d={[[652, 648, 35, 10]]} />
    <R f="#8a7a2e" d={[[714, 652, 7, 9]]} />
    <R f={TL} d={[[737, 652, 14, 10], [755, 652, 14, 10], [780, 652, 8, 10], [539, 725, 10, 16]]} />
    <R f="#0fa53a" d={[[896, 650, 21, 15], [926, 650, 21, 15]]} />
    <R f="#ef7a33" d={[[957, 651, 8, 14], [967, 651, 8, 14]]} />
    <R f="#222224" d={[[700, 722, 40, 11], [567, 722, 12, 11], [549, 722, 12, 11]]} />
    <R f="#c4000a" d={[[737, 722, 10, 12]]} />
    <Conn f={RD} d={[...run(738, 7, 734), [618, 734, 69, 10]]} />
    <Conn f={TL} dot="#7de0bb" d={[[587, 734, 17, 10]]} />
    <R f={BL} d={[[604, 734, 9, 10]]} />
    <Chips d={[[509, 658, GN], [520, 658, GN], [509, 725, OR], [520, 725, BL], [704, 723, OR], [836, 717, OR], [847, 717, GN], [896, 726, OR], [907, 726, BL], [926, 726, OR], [937, 726, BL], [955, 726, OR], [966, 726, BL]]} />

    {/* row 6 */}
    <Rail x={1010} w={16} y={809} />
    <rect x="505" y="785" width="505" height="77" fill="#0f0f10" />
    <rect x="505" y="842" width="505" height="20" fill="#060606" />
    <Slots y={785} d={[505, 636, 726, 815, 905, 949.500, 979]} />
    <Terms y={777} h={8} d={[[511, 552], [555, 598], [605, 630], [649, 657], [660, 686], [689, 706], [709, 718], [735, 761], [839, 881], [956, 976], [985, 1006]]} />
    <Terms y={787} h={7} d={[[986, 1006]]} />
    <Labels y={810} c="#a8a8a8" bold={false} d={[[518, 'ampio'], [652, 'ampio'], [741, 'ampio'], [831, 'ampio'], [918, 'ampio'], [963, 'ampio'], [993, 'ampio']]} />
    <Labels y={815} c="#8a8a8a" bold={false} d={[[557, 'Tersus']]} />
    <circle cx="585" cy="815" r="4" fill="none" stroke="#444" />
    <Labels y={837} d={[[512, 'M-SERV-s'], [646, 'M-ROH-1s'], [735, 'M-LED-MW7-s'], [824, 'M-INOC-4s']]} />
    <Labels y={838} size={4} d={[[960, 'M-DIM-s'], [989, 'M-OC-P']]} />
    <Labels y={829} size={4} d={[[924, 'M-SP-s']]} />
    <Leds d={[[594, 630, 823.500], [698, 719, 823.500], [798, 809, 823.500], [877, 898, 823.500], [962, 973, 821.500], [985, 1006, 821.500]]} />
    <R f="#a02020" d={[[962, 820.500, 8, 2]]} />
    <rect x="914" y="811" width="30" height="13" fill="#7fe0a0" />
    <g fontSize="5" fill="#1d5a35"><text x="917" y="817">STREFA 1</text><text x="917" y="823">TEMP 22C</text></g>
    <R f="none" s="#ccc" d={[[915.500, 832, 4, 4], [926.500, 832, 4, 4], [938, 832, 4, 4]]} />
    <Terms y={863} h={8} d={[[511, 524], [526, 543], [646, 662], [664, 682], [685, 702], [705, 722], [736, 753], [858, 893], [920, 937]]} />
    <rect x="545" y="864" width="76" height="7" fill="#4fae7a" stroke="#2b6f4a" />
    <Terms y={853} h={7} d={[[986, 1006]]} />

    {/* row 7, cut by the window edge */}
    <Rail x={1010} w={16} y={937} />
    <rect x="505" y="913" width="505" height="60" fill="#0f0f10" />
    <Slots y={913} d={[505, 592.500, 682, 771.500, 860, 949.500, 979]} />
    <Terms y={905} h={8} d={[[517, 542], [555, 580], [606, 631], [644, 670], [705, 748], [794, 837]]} />
    <Labels y={938} c="#a8a8a8" bold={false} d={[[519, 'ampio'], [608, 'ampio'], [697, 'ampio'], [786, 'ampio'], [875, 'ampio'], [963, 'ampio']]} />
    {[551, 640.500].map((x) => <g key={x} fill="none" stroke="#777"><circle cx={x} cy="943" r="3.500" /><circle cx={x} cy="960" r="3.500" /></g>)}
    <Leds d={[[560, 586, 951.500], [649, 675, 951.500], [744, 764, 951.500], [832, 853, 951.500], [922, 943, 951.500], [964, 973, 949.500], [994, 1003, 949.500]]} />
    <Labels y={965} d={[[512, 'M-REL-C10s'], [601, 'M-REL-C10s'], [689, 'M-INOC-4s'], [779, 'M-INOC-4s'], [868, 'M-INOC-4s']]} />
    <Labels y={966} size={4} d={[[957, 'M-CON-4s'], [989, 'M-DIM-s']]} />

    {/* pointer */}
    <path d="M453 381v15l3.500-3 2.500 6 2.500-1-2.500-6h5z" fill="#222" stroke="#eee" />
  </svg>
);

/* ---------- docked panel ---------- */

const TABS: [string, string, React.ReactNode][] = [
  ['Warstwy i obiekty', 'w-[153px] pl-3', <g key="a" stroke="none"><path d="M3 2h8l-1 3H1z" fill="#2b8fd0" /><path d="M6 6h9l-2 3.500H4z" fill="#7ec3ee" /><path d="M5 11h9l-2 3.500H3z" fill={W} /></g>],
  ['Symbole', 'w-[117px] pl-[22px]', <path key="a" d="M8 14.500C2 9.500 1 7 1.500 4.500 3 .5 7 1.500 8 3.500c1-2 5-3 6.500 1C15 7 14 9.500 8 14.500z" fill="#f0228a" stroke="#ffd3ea" strokeWidth="1.200" />],
  ['Eksportuj', 'w-[117px] pl-[22px]', <g key="a">{page}<path d="M8 9h8M13 6.500L15.500 9 13 11.500" stroke={G} /></g>],
  ['Wypełnienie i kontur', 'w-[170px] pl-[22px]', <g key="a"><path d="M1.500 14V2H15" strokeWidth="1.200" /><path d="M15 3L7 11" strokeWidth="2" /><path d="M7 10c-2 0-2 3-4 4 3 1 5-1 5-3z" fill="#2c86c4" stroke="none" /></g>],
];

const Dock = () => (
  <section className="flex w-[664px] shrink-0 flex-col gap-0.5 pb-2 pt-[5px]">
    <div role="tablist" className="flex h-[37px] shrink-0 overflow-hidden bg-[#2a2a2a] pl-[7px]">
      {TABS.map(([name, cls, icon], i) => (
        <div key={name} className={`flex shrink-0 items-center gap-1 border-b-4 pt-0.5 ${cls} ${i === 0 ? 'border-[#2a5593] bg-[#303030]' : 'border-transparent'}`}>
          <button type="button" role="tab" aria-selected={i === 0} className="flex items-center gap-0.5 whitespace-nowrap">
            <Icon>{icon}</Icon>
            {name}
          </button>
          <button type="button" aria-label={`Zamknij: ${name}`} className="text-[#9a9a9a]"><X className="size-3" strokeWidth={4} /></button>
        </div>
      ))}
      <button type="button" aria-label="Lista kart" className="ml-auto mr-1.5 shrink-0 text-[#777]"><ChevronDown className="size-3" /></button>
    </div>
    <div className="flex h-[33px] shrink-0 items-center text-[#eee]">
      <ToolButton label="Dodaj warstwę" className="ml-2 size-5"><path d="M9 1v8M5 5h8" stroke={G} strokeWidth="1.800" /><path d="M4 11h10l-3 4H1z" fill={W} stroke="none" /></ToolButton>
      <button type="button" aria-label="W górę" className="ml-auto mr-4 w-5"><ChevronUp className="size-5" strokeWidth={2.5} /></button>
      <button type="button" aria-label="W dół" className="mr-4 w-5"><ChevronDown className="size-5" strokeWidth={2.5} /></button>
      <ToolButton label="Usuń" className="mr-7 size-5"><path d="M2 3h12v2H2zM6 1h4v2H6zM3 6h10l-1 9H4z" fill={W} stroke="none" /><path d="M6.500 7v7M9.500 7v7" stroke="#333" strokeWidth="1" /></ToolButton>
      <button type="button" aria-label="Ustawienia" className="mr-3 w-5"><Settings className="size-4" strokeWidth={3.5} /></button>
      <label className="flex h-full w-[254px] items-center rounded border border-[#222] bg-[#2d2d2d] pl-1">
        <Search className="size-4" strokeWidth={3} />
        <input type="search" aria-label="Szukaj obiektu" className="min-w-0 flex-1 bg-transparent outline-none" />
      </label>
    </div>
    <div className="flex min-h-0 flex-1 border border-[#1f1f1f] bg-[#2e2e2e]">
      <ul className="h-[790px] flex-1 overflow-hidden">
        {OBJECTS.map((name) => (
          <li key={name} className="flex h-6 items-center gap-2.5 pb-px pl-8 text-[#ececec]">
            <Fleur />
            {name}
            <span className="ml-auto h-[23px] w-[7px] bg-[#46a05a]" />
          </li>
        ))}
      </ul>
      <div className="w-[17px] px-[5px] pt-48">
        <div className="h-48 w-2 rounded bg-[#a5a5a7]" />
      </div>
    </div>
  </section>
);

/* ---------- page ---------- */

export default function App() {
  return (
    <div className="relative flex min-h-screen flex-col overflow-hidden bg-black pb-10 pt-7 font-['Noto_Sans',sans-serif] text-[11px] leading-4 text-[#e8e8e8]">
      <div className="flex flex-1 flex-col bg-[#373737]">
        <nav className="flex h-6 w-[485px] items-start justify-between px-2">
          {MENU.map((m) => <button key={m} type="button">{m}</button>)}
        </nav>

        <div className="flex h-[38px] items-start">
          <div className="flex h-[33px] items-center gap-[34px] pl-[13px]">
            {SELECT_ACTIONS.map((group, i) => (
              <div key={i} className="flex gap-[21px]">
                {group.map(([label, icon]) => <ToolButton key={label} label={label}>{icon}</ToolButton>)}
              </div>
            ))}
          </div>
          <div className="flex h-[33px] items-center gap-2 pl-[31px]">
            <Spin id="x" label="X:" value="-1046,898" className="w-[109px]" />
            <Spin id="y" label="Y:" value="577,753" className="w-[109px]" />
            <Spin id="w" label="Szerokość:" value="662,500" className="w-[105px]" />
            <ToolButton label="Zablokuj proporcje" className="mx-1.5"><path d="M2 8h9v7H2z" fill={W} stroke="none" /><path d="M9 8V4.500a2.500 2.500 0 0 1 5 0V7" strokeWidth="2" /></ToolButton>
            <Spin id="h" label="Wysokość:" value="383,701" className="w-[104px]" />
          </div>
          <div className="relative ml-1 h-[33px] w-[60px] shrink-0">
            <select aria-label="Jednostka" className="h-full w-full appearance-none rounded border border-[#222] bg-[#343434] pl-3 outline-none">
              <option>mm</option>
            </select>
            <svg viewBox="0 0 12 7" className="pointer-events-none absolute right-2.5 top-[13px] h-[7px] w-3" fill={W}><path d="M0 0h12L6 7z" /></svg>
          </div>
          <div className="flex pl-4">
            {SNAP.map(([label, on, icon]) => (
              <ToolButton key={label} label={label} active={on} className="mx-px h-[33px] w-[35px]">
                {icon}
                <path d="M2 13h8" strokeDasharray="2 1.500" />
                <path d="M10 10.500l4 2.500-4 2.500z" fill={W} stroke="none" />
              </ToolButton>
            ))}
          </div>
          <div className="ml-auto flex gap-1 pr-1.5">
            <ToolButton label="Przyciąganie" active className="h-[33px] w-9"><path d="M6 3h4a5 5 0 0 1 0 10H6" strokeWidth="2.500" /></ToolButton>
            <ToolButton label="Opcje przyciągania" className="h-[33px] w-[34px] border border-[#222]"><path d="M10 3v10L5 8z" fill={W} stroke="none" /></ToolButton>
          </div>
        </div>

        <main className="flex flex-1">
          <div className="w-[35px] shrink-0 border-r-2 border-[#222]">
            <div className="flex h-[741px] flex-col justify-between">
              {TOOLS.map(([label, icon], i) => (
                <div key={label} className="flex h-8 items-center pl-px">
                  <ToolButton label={label} active={i === 0} className="h-[31px] w-[30px]">{icon}</ToolButton>
                </div>
              ))}
            </div>
          </div>
          <div className="grid min-w-0 flex-1 grid-cols-[20px_1fr] grid-rows-[20px_859px]">
            <button type="button" aria-label="Zablokuj prowadnice" className="flex items-center justify-center bg-[#242424]">
              <svg viewBox="0 0 12 16" className="h-4 w-3"><path d="M1 7h10v8H1z" fill={W} /><path d="M3 7V4.500a3 3 0 0 1 6 0V7" fill="none" stroke={W} strokeWidth="2" /></svg>
            </button>
            <TopRuler />
            <SideRuler />
            <div className="overflow-hidden"><Drawing /></div>
          </div>
          <div className="flex w-[13px] shrink-0 items-center justify-center bg-[#343436]">
            <svg viewBox="0 0 4 14" className="h-3.5 w-1" fill={W}><circle cx="2" cy="2" r="1.500" /><circle cx="2" cy="7" r="1.500" /><circle cx="2" cy="12" r="1.500" /></svg>
          </div>
          <Dock />
          <div className="flex w-[49px] shrink-0 flex-col items-center gap-8 pl-1 pt-3.5">
            {COMMANDS.map((group, i) => (
              <div key={i} className="flex flex-col gap-[19px]">
                {group.map(([label, icon]) => <ToolButton key={label} label={label}>{icon}</ToolButton>)}
              </div>
            ))}
          </div>
        </main>

        <div className="flex h-[35px] items-end">
          <button type="button" aria-label="Brak koloru" className="ml-px h-[33px] w-[33px] shrink-0 bg-white">
            <svg viewBox="0 0 33 33" className="size-full"><path d="M3 3l27 27M30 3L3 30" stroke="#9c2f47" strokeWidth="2" /></svg>
          </button>
          <div className="flex h-4 flex-1">
            {PALETTE.map((c, i) => (
              <button key={i} type="button" aria-label={`#${c}`} className="flex-1 border-r border-black/40" style={{ backgroundColor: `#${c}` }} />
            ))}
          </div>
          <div className="flex h-full w-[84px] items-center pl-1.5">
            <button type="button" aria-label="Paleta w górę" className="w-[31px]"><ChevronUp className="size-5" strokeWidth={2.5} /></button>
            <button type="button" aria-label="Paleta w dół" className="w-[27px]"><ChevronDown className="size-5" strokeWidth={2.5} /></button>
            <button type="button" aria-label="Menu palety" className="flex h-7 w-[18px] flex-col items-center justify-center gap-[3px] rounded border border-[#222]">
              <span className="h-0.5 w-3.5 bg-white" />
              <span className="h-0.5 w-3.5 bg-white" />
              <span className="h-0.5 w-3.5 bg-white" />
            </button>
          </div>
        </div>

        <footer className="flex h-9 items-center pt-0.5">
          <dl className="grid w-[181px] grid-cols-[69px_1fr] gap-x-[31px] leading-[17px]">
            <dt className="text-right">Wypełnienie:</dt>
            <dd>N/D</dd>
            <dt className="text-right">Kontur:</dt>
            <dd>N/D</dd>
          </dl>
          <Spin id="k" label="K:" value="100" className="w-[70px]" />
          <button type="button" className="ml-3 flex items-center gap-2">
            <span className="h-4 w-[3px] bg-white" />
            TŁO
          </button>
          <ToolButton label="Pokaż warstwę" className="ml-5"><circle cx="8" cy="9.500" r="4.300" strokeWidth="2" /><circle cx="8" cy="9.500" r="1.500" fill={W} stroke="none" /><path d="M2 4c3 3 9 3 12 0M8 2v3M4 2l1 3M12 2l-1 3" strokeWidth="1.300" /></ToolButton>
          <button type="button" aria-label="Zablokuj warstwę" className="ml-3 flex h-8 w-[34px] items-center justify-center rounded bg-[#2a4a80]">
            <LockKeyhole className="size-4" fill="white" strokeWidth={2.5} />
          </button>
          <p className="ml-2 whitespace-nowrap">
            Nie wybrano obiektów. Kliknij, Shift+kliknięcie, Alt+przewiń myszą na wierzchu obiektów lub przeciągnij wokół obiektów do wybrania.
          </p>
          <button type="button" aria-label="Zwiń" className="ml-auto mr-4">
            <svg viewBox="0 0 6 12" className="h-3 w-1.5" fill={W}><path d="M6 0v12L0 6z" /></svg>
          </button>
          <div className="flex h-8 w-[404px] items-start rounded border border-[#262626] pl-[122px]">
            <span className="flex gap-4 text-[#cfcfcf]"><span>Y:</span><span>125,77</span></span>
            <span className="ml-auto mr-1.5 flex h-full items-center gap-1">
              <button type="button" aria-label="Pomniejsz"><Minus className="size-4" strokeWidth={3} /></button>
              <button type="button" aria-label="Powiększ"><Plus className="size-4" strokeWidth={3} /></button>
            </span>
          </div>
          <span className="w-3" />
        </footer>
      </div>

      {/* video title strip */}
      <div className="absolute right-[68px] top-[837px] flex h-[110px] w-[1042px] items-end rounded-md bg-black/60 px-4 pb-6">
        <h1 className="flex w-full items-baseline justify-between whitespace-nowrap font-['Roboto_Condensed','Liberation_Sans',sans-serif] text-[68px] leading-[64px] [-webkit-box-reflect:below_-10px_linear-gradient(transparent_30%,rgba(255,255,255,0.25))]">
          <span className="font-bold text-white">PLANER WYPOSAŻENIA</span>
          <span className="text-[62px] text-[#fdcb0c]">ROZDZIELNIC</span>
        </h1>
      </div>

      {/* sponsor logos */}
      <div className="absolute right-[65px] top-0 h-[126px] w-[206px] whitespace-nowrap bg-white px-[7px] font-['Liberation_Sans',sans-serif]">
        <div className="bg-linear-to-br from-[#ff9a4a] via-[#d2600c] to-[#5a2800] bg-clip-text font-['Roboto_Condensed','Liberation_Sans',sans-serif] text-[80px] font-bold leading-[94px] text-transparent">E-LEC</div>
        <div className="bg-linear-to-r from-[#a04812] to-[#4a2008] bg-clip-text text-[28px] leading-7 text-transparent">SYSTEMS</div>
      </div>
      <div className="absolute bottom-0 right-[65px] flex h-16 w-[337px] items-center bg-white pl-2 font-['Lato',sans-serif] text-[60px] leading-[60px]">
        <svg viewBox="0 0 52 54" className="h-[54px] w-[52px]" fill="none" stroke="#111" strokeWidth="4">
          <path d="M19 3H2v48h48V3H26v12M26 13L11 28v14M26 13l15 15v14" />
        </svg>
        <span className="ml-4 text-[#b01116]">EL</span>
        <span className="text-black">DAG</span>
        <svg viewBox="0 0 46 48" className="ml-auto mr-2 h-12 w-[46px]">
          <circle cx="23" cy="24" r="21" fill="#fbf200" stroke="#111" strokeWidth="4" />
          <path d="M9 27l7-7 3 7 7-7 3 7 7-7" fill="none" stroke="#111" strokeWidth="3" />
        </svg>
      </div>
    </div>
  );
}
